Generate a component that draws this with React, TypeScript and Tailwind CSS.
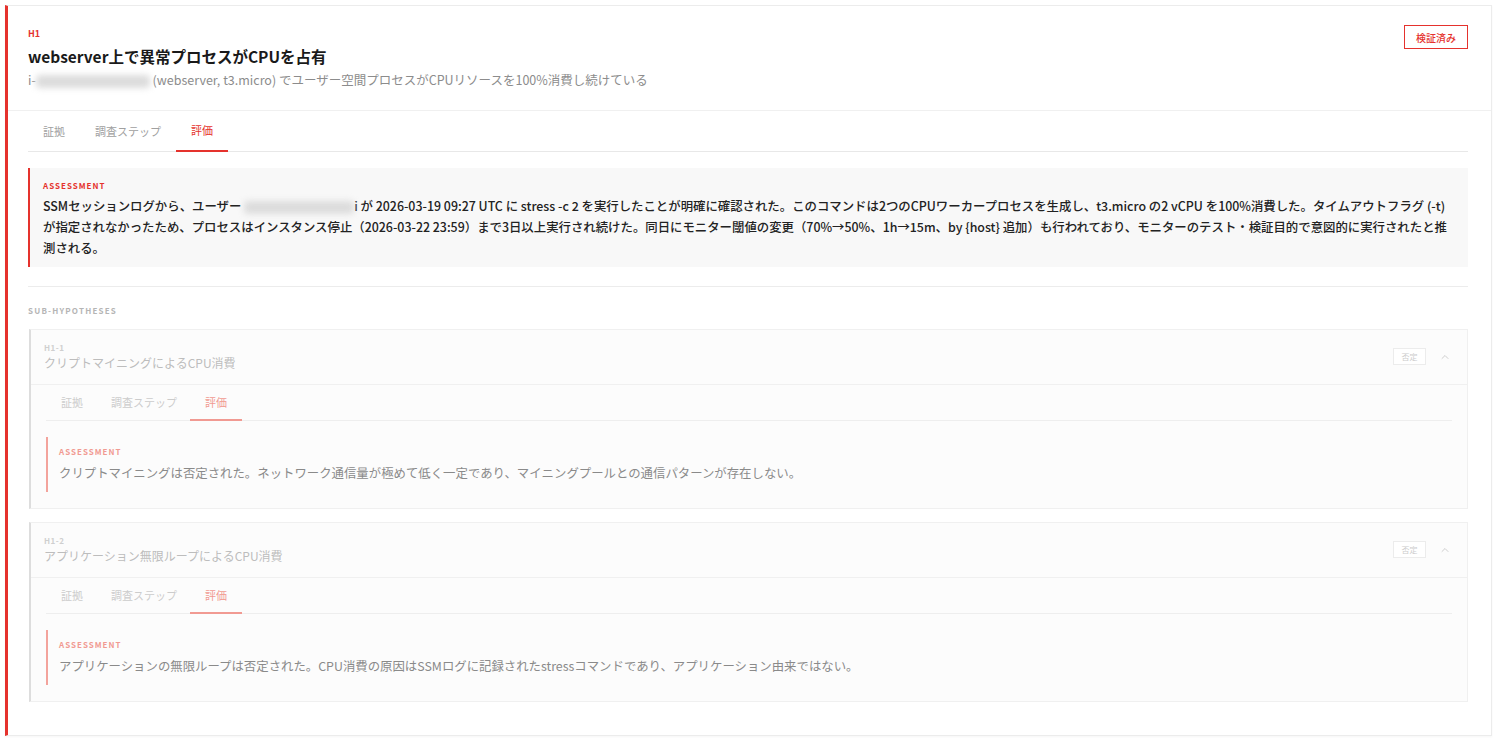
import React from "react";
import { ChevronUp } from "lucide-react";

const FONT = { fontFamily: '"Noto Sans CJK JP", "Noto Sans", sans-serif' };

function Blur({ w }: { w: number }) {
  return (
    <span
      className="inline-block align-middle h-[13px] bg-[#dcdcdc] blur-[3px] rounded-sm"
      style={{ width: w }}
    />
  );
}

function SubCard({
  id,
  title,
  text,
}: {
  id: string;
  title: string;
  text: string;
}) {
  return (
    <div className="border border-[#f0f0f0] border-l-2 border-l-[#dddddd] bg-[#fcfcfc]">
      <div className="flex items-start justify-between pl-[13px] pr-[16px] pt-[12px] pb-[12px] border-b border-[#f0f0f0]">
        <div>
          <div className="text-[8px] leading-[12px] font-semibold tracking-[0.5px] text-[#cfcfcf]">{id}</div>
          <div className="text-[12px] leading-[18px] text-[#bdbdbd]">{title}</div>
        </div>
        <div className="flex items-center gap-[13px] mt-[6px]">
          <span className="h-[17px] w-[33px] flex items-center justify-center border border-[#ececec] bg-white text-[8px] text-[#cccccc]">否定</span>
          <ChevronUp className="w-[12px] h-[12px] text-[#cfcfcf]" strokeWidth={2} />
        </div>
      </div>
      <div className="px-[15px] pb-[16px]">
        <div className="flex border-b border-[#eeeeee] h-[36px]">
          <div className="px-[15px] flex items-center text-[11px] text-[#cccccc]">証拠</div>
          <div className="px-[13px] flex items-center text-[11px] text-[#cccccc]">調査ステップ</div>
          <div className="px-[15px] flex items-center text-[11px] text-[#f19a92] border-b-2 border-[#f19a92] -mb-px">評価</div>
        </div>
        <div className="mt-[16px] border-l-2 border-[#f3a39c] pl-[11px] pt-[9px] pb-[9px]">
          <div className="text-[8px] leading-[12px] font-semibold tracking-[1px] text-[#f19a92]">ASSESSMENT</div>
          <div className="mt-[5px] text-[12.4px] leading-[20px] text-[#8a8a8a]">{text}</div>
        </div>
      </div>
    </div>
  );
}

export default function App() {
  return (
    <div className="bg-white pl-[5px] pr-[8px] pt-[5px] w-[1500px] h-[748px]" style={FONT}>
      <div className="border border-[#ececec] border-l-[3px] border-l-[#e5322d] bg-white h-[731px] shadow-[0_1px_2px_rgba(0,0,0,0.04)]">
        <header className="flex justify-between pl-[20px] pr-[23px] pt-[22px] pb-[21px] border-b border-[#f0f0f0]">
          <div>
            <div className="text-[9px] leading-[12px] font-bold text-[#e5322d]">H1</div>
            <h1 className="mt-[5px] text-[15.5px] leading-[22px] font-semibold text-[#1a1a1a]">
              webserver上で異常プロセスがCPUを占有
            </h1>
            <p className="mt-[4px] text-[12.5px] leading-[18px] text-[#8c8c8c]">
              i-<Blur w={114} /> (webserver, t3.micro) でユーザー空間プロセスがCPUリソースを100%消費し続けている
            </p>
          </div>
          <button className="mt-[-3px] h-[24px] w-[64px] flex items-center justify-center border border-[#e5322d] text-[10px] font-medium text-[#e5322d] bg-white">
            検証済み
          </button>
        </header>

        <div className="pl-[20px] pr-[23px]">
          <div className="flex h-[41px] border-b border-[#e8e8e8]">
            <div className="px-[15px] flex items-center text-[11px] text-[#a0a0a0]">証拠</div>
            <div className="px-[15px] flex items-center text-[11px] text-[#a0a0a0]">調査ステップ</div>
            <div className="px-[15px] flex items-center text-[11px] text-[#e5322d] border-b-2 border-[#e5322d] -mb-px">評価</div>
          </div>

          <div className="mt-[16px] bg-[#f8f8f8] border-l-2 border-[#e5322d] pl-[13px] pr-[14px] pt-[12px] pb-[8px]">
            <div className="text-[8px] leading-[12px] font-bold tracking-[1px] text-[#e5322d]">ASSESSMENT</div>
            <div className="mt-[4px] text-[12.4px] leading-[21px] font-medium text-[#222222]">
              SSMセッションログから、ユーザー <Blur w={110} />i が 2026-03-19 09:27 UTC に stress -c 2 を実行したことが明確に確認された。このコマンドは2つのCPUワーカープロセスを生成し、t3.micro の2 vCPU を100%消費した。タイムアウトフラグ (-t) が指定されなかったため、プロセスはインスタンス停止（2026-03-22 23:59）まで3日以上実行され続けた。同日にモニター閾値の変更（70%→50%、1h→15m、by {"{host}"} 追加）も行われており、モニターのテスト・検証目的で意図的に実行されたと推測される。
            </div>
          </div>

          <div className="mt-[19px] border-t border-[#ececec]" />

          <div className="mt-[18px] text-[8px] leading-[12px] font-bold tracking-[1.2px] text-[#b5b5b5]">SUB-HYPOTHESES</div>

          <div className="mt-[12px] ml-px flex flex-col gap-[13px]">
            <SubCard
              id="H1-1"
              title="クリプトマイニングによるCPU消費"
              text="クリプトマイニングは否定された。ネットワーク通信量が極めて低く一定であり、マイニングプールとの通信パターンが存在しない。"
            />
            <SubCard
              id="H1-2"
              title="アプリケーション無限ループによるCPU消費"
              text="アプリケーションの無限ループは否定された。CPU消費の原因はSSMログに記録されたstressコマンドであり、アプリケーション由来ではない。"
            />
          </div>
        </div>
      </div>
    </div>
  );
}
